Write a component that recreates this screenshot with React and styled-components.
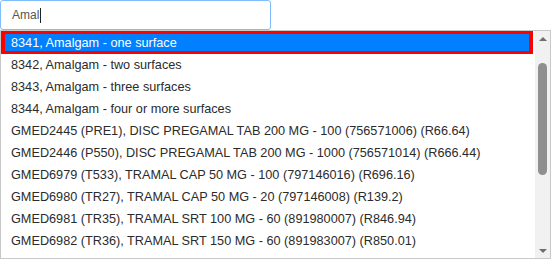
import React from 'react';
import styled, { createGlobalStyle } from 'styled-components';

const options = [
  '8341, Amalgam - one surface',
  '8342, Amalgam - two surfaces',
  '8343, Amalgam - three surfaces',
  '8344, Amalgam - four or more surfaces',
  'GMED2445 (PRE1), DISC PREGAMAL TAB 200 MG - 100 (756571006) (R66.64)',
  'GMED2446 (P550), DISC PREGAMAL TAB 200 MG - 1000 (756571014) (R666.44)',
  'GMED6979 (T533), TRAMAL CAP 50 MG - 100 (797146016) (R696.16)',
  'GMED6980 (TR27), TRAMAL CAP 50 MG - 20 (797146008) (R139.2)',
  'GMED6981 (TR35), TRAMAL SRT 100 MG - 60 (891980007) (R846.94)',
  'GMED6982 (TR36), TRAMAL SRT 150 MG - 60 (891983007) (R850.01)',
];

function App() {
  return (
    <>
      <GlobalStyle />
      <StyledRoot>
        <SearchBox>
          <Typed>Amal</Typed>
          <Caret />
        </SearchBox>
        <Dropdown>
          <List>
            {options.map((text, i) => (
              <Option key={text} selected={i === 0}>
                {text}
              </Option>
            ))}
          </List>
          <Scrollbar>
            <Arrow />
            <Track>
              <Thumb />
            </Track>
            <Arrow down />
          </Scrollbar>
        </Dropdown>
      </StyledRoot>
    </>
  );
}

export default App;

const GlobalStyle = createGlobalStyle`
  body {
    margin: 0;
    background: #fff;
    font-family: 'Liberation Sans', Arial, sans-serif;
  }
`;

const StyledRoot = styled.div`
  width: 551px;
  height: 259px;
  display: flex;
  flex-direction: column;
  overflow: hidden;
`;

const SearchBox = styled.div`
  box-sizing: border-box;
  width: 271px;
  height: 30px;
  border: 1px solid #80bdff;
  border-radius: 3px;
  padding-left: 11px;
  display: flex;
  align-items: center;
  font-size: 12px;
  color: #555;
`;

const Typed = styled.span`
  line-height: 14px;
`;

const Caret = styled.span`
  width: 1px;
  height: 15px;
  background: #222;
  margin-left: 1px;
`;

const Dropdown = styled.div`
  box-sizing: border-box;
  width: 551px;
  height: 229px;
  border: 1px solid #c8c8c8;
  display: flex;
`;

const List = styled.div`
  flex: 1;
  overflow: hidden;
  padding-right: 2px;
`;

const Option = styled.div`
  box-sizing: border-box;
  height: ${(p) => (p.selected ? '23px' : '22px')};
  display: flex;
  align-items: center;
  padding-left: 6px;
  border: 3px solid ${(p) => (p.selected ? '#ff0000' : 'transparent')};
  border-left-width: 4px;
  border-right-width: 4px;
  background: ${(p) => (p.selected ? '#0080ff' : 'transparent')};
  color: ${(p) => (p.selected ? '#fff' : '#2b2b2b')};
  font-size: 12.7px;
  white-space: nowrap;
`;

const Scrollbar = styled.div`
  width: 15px;
  background: #f1f1f1;
  display: flex;
  flex-direction: column;
  align-items: center;
`;

const Arrow = styled.div`
  height: 15px;
  width: 15px;
  display: flex;
  align-items: center;
  justify-content: center;
  &::before {
    content: '';
    border-left: 4px solid transparent;
    border-right: 4px solid transparent;
    ${(p) =>
      p.down ? 'border-top: 4px solid #6e6e6e;' : 'border-bottom: 4px solid #6e6e6e;'}
  }
`;

const Track = styled.div`
  flex: 1;
  display: flex;
  justify-content: center;
  padding-top: 17px;
`;

const Thumb = styled.div`
  width: 9px;
  height: 112px;
  border-radius: 5px;
  background: #8f8f8f;
`;
